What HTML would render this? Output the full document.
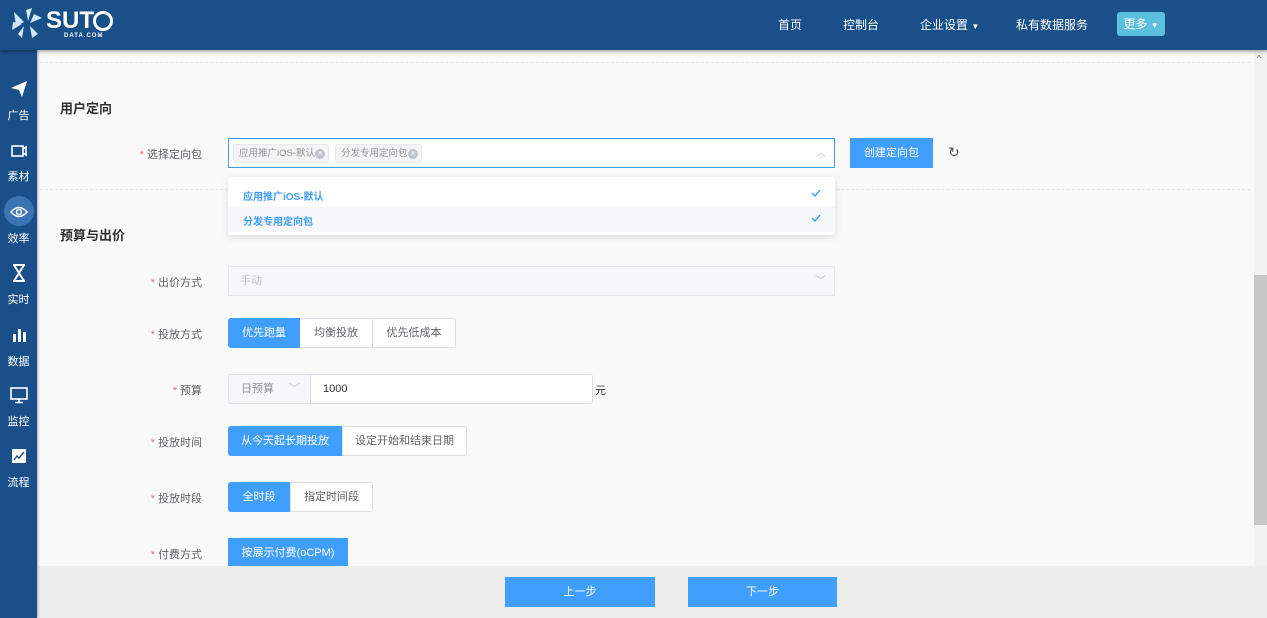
<!DOCTYPE html>
<html><head><meta charset="utf-8"><style>
*{box-sizing:border-box;margin:0;padding:0}
body{width:1267px;height:618px;overflow:hidden;background:#f9f9f9;font-family:"Liberation Sans","Noto Sans CJK SC",sans-serif;font-size:12px;color:#606266;position:relative}
.abs{position:absolute}
.hdr{left:0;top:0;width:1267px;height:50px;background:#1a5089;box-shadow:0 2px 3px rgba(0,0,0,.3);z-index:3}
.nav{color:#fff;font-size:12px;top:16px}
.side{left:0;top:50px;width:37px;height:568px;background:#1a5089;z-index:2;box-shadow:1px 0 2px rgba(0,0,0,.3)}
.si{position:absolute;left:0;width:37px;text-align:center;color:#fff;font-size:11px}
.dot{border-top:1px dashed #e6e6e6;left:40px;width:1210px}
.h{font-size:13px;font-weight:bold;color:#303133;left:60px}
.lbl{width:160px;text-align:right;left:42px;font-size:11px;color:#606266}
.lbl b{color:#f56c6c;font-weight:normal;margin-right:3px}
.btn{position:absolute;height:30px;line-height:28px;text-align:center;font-size:11px;border:1px solid #dcdfe6;background:#fff;color:#606266}
.pri{background:#409eff;border-color:#409eff;color:#fff}
.tag{position:absolute;top:144px;height:19px;line-height:18px;background:#f4f4f5;border:1px solid #e9e9eb;border-radius:3px;font-size:9.5px;color:#909399;padding-left:5px;white-space:nowrap;overflow:hidden}
.tag i{position:absolute;right:3px;top:4px;width:10px;height:10px;border-radius:50%;background:#c0c4cc;color:#fff;font-size:8px;line-height:10px;text-align:center;font-style:normal}
.ck{position:absolute;left:811px}
</style></head><body>
<div class="abs hdr">
 <svg class="abs" style="left:10px;top:8px" width="36" height="32" viewBox="0 0 36 32"><g fill="#cfe7f7"><path d="M4 4 L14 14 L6 18Z"/><path d="M16 2 L22 0 L18 13Z"/><path d="M24 6 L32 10 L20 15Z"/><path d="M20 18 L28 26 L22 30Z"/><path d="M14 18 L12 30 L8 26Z"/><path d="M3 14 L12 16 L2 22Z"/></g></svg>
 <div class="abs" style="left:46px;top:7px;color:#fff;font-size:24px;font-weight:bold">SUT</div>
 <div class="abs" style="left:93px;top:11px;width:20px;height:20px;border:3px solid #fff;border-radius:50%"></div>
 <div class="abs" style="left:64px;top:33px;color:#fff;font-size:6px;font-weight:bold;letter-spacing:1px">DATA.COM</div>
 <div class="abs nav" style="left:778px">首页</div>
 <div class="abs nav" style="left:843px">控制台</div>
 <div class="abs nav" style="left:920px">企业设置 <span style="font-size:8px">▼</span></div>
 <div class="abs nav" style="left:1016px">私有数据服务</div>
 <div class="abs" style="left:1117px;top:12px;width:48px;height:24px;background:#5bc0de;border-radius:3px;color:#fff;font-size:12px;line-height:24px;text-align:center">更多 <span style="font-size:8px">▼</span></div>
</div>
<div class="abs side">
 <div class="si" style="top:30px"><svg width="18" height="18" viewBox="0 0 18 18"><path d="M1 8 L17 1 L12 17 L9 10Z" fill="#fff"/></svg><div style="margin-top:6px">广告</div></div>
 <div class="si" style="top:93px"><svg width="18" height="16" viewBox="0 0 18 16"><rect x="2" y="3" width="11" height="10" fill="none" stroke="#fff" stroke-width="1.6"/><path d="M13 6 L16 4 V12 L13 10" fill="none" stroke="#fff" stroke-width="1.6"/></svg><div style="margin-top:6px">素材</div></div>
 <div class="abs" style="left:4px;top:146px;width:30px;height:30px;border-radius:50%;background:#3a74b2"></div>
 <div class="si" style="top:155px"><svg width="18" height="14" viewBox="0 0 18 14"><path d="M1 7 Q9 -2 17 7 Q9 16 1 7Z" fill="none" stroke="#fff" stroke-width="1.6"/><circle cx="9" cy="7" r="2.5" fill="none" stroke="#fff" stroke-width="1.6"/></svg><div style="margin-top:8px">效率</div></div>
 <div class="si" style="top:214px"><svg width="16" height="18" viewBox="0 0 16 18"><path d="M2 1 H14 M2 17 H14 M3 1 L8 9 L3 17 M13 1 L8 9 L13 17" fill="none" stroke="#fff" stroke-width="2"/></svg><div style="margin-top:6px">实时</div></div>
 <div class="si" style="top:277px"><svg width="16" height="16" viewBox="0 0 16 16"><rect x="2" y="7" width="3" height="8" fill="#fff"/><rect x="7" y="2" width="3" height="13" fill="#fff"/><rect x="12" y="5" width="3" height="10" fill="#fff"/></svg><div style="margin-top:7px">数据</div></div>
 <div class="si" style="top:337px"><svg width="18" height="17" viewBox="0 0 18 17"><rect x="1" y="1" width="16" height="11" fill="none" stroke="#fff" stroke-width="1.6"/><path d="M9 12 V15 M5 15.5 H13" stroke="#fff" stroke-width="1.6"/></svg><div style="margin-top:6px">监控</div></div>
 <div class="si" style="top:398px"><svg width="16" height="16" viewBox="0 0 16 16"><rect x="1" y="1" width="14" height="14" fill="#fff"/><path d="M3 12 L6 8 L8 10 L13 4" fill="none" stroke="#1a5089" stroke-width="1.4"/></svg><div style="margin-top:7px">流程</div></div>
</div>
<div class="abs" style="left:1254px;top:50px;width:13px;height:516px;background:#f1f1f1"></div>
<div class="abs" style="left:1254px;top:275px;width:13px;height:250px;background:#c8c8c8"></div>
<div class="abs" style="left:1257px;top:54px;font-size:8px;color:#555">^</div>
<div class="abs dot" style="top:62px"></div>
<div class="abs dot" style="top:189px"></div>
<div class="abs h" style="top:98px">用户定向</div>
<div class="abs lbl" style="top:146px"><b>*</b>选择定向包</div>
<div class="abs" style="left:228px;top:138px;width:607px;height:30px;border:1px solid #409eff;background:#fff"></div>
<div class="tag" style="left:233px;width:96px">应用推广iOS-默认<i>×</i></div>
<div class="tag" style="left:335px;width:87px">分发专用定向包<i>×</i></div>
<div class="abs" style="left:816px;top:144px;color:#c0c4cc;font-size:10px">︿</div>
<div class="abs" style="left:228px;top:177px;width:607px;height:58px;background:#fff;box-shadow:0 2px 8px rgba(0,0,0,.12);border-radius:3px"></div>
<div class="abs" style="left:228px;top:207px;width:607px;height:25px;background:#f5f7fa"></div>
<div class="abs" style="left:243px;top:188px;font-size:10px;font-weight:bold;color:#409eff">应用推广iOS-默认</div>
<div class="abs" style="left:243px;top:213px;font-size:10px;font-weight:bold;color:#409eff">分发专用定向包</div>
<svg class="ck" style="top:189px" width="10" height="8" viewBox="0 0 10 8"><path d="M1 4 L4 7 L9 1" fill="none" stroke="#409eff" stroke-width="1.4"/></svg>
<svg class="ck" style="top:214px" width="10" height="8" viewBox="0 0 10 8"><path d="M1 4 L4 7 L9 1" fill="none" stroke="#409eff" stroke-width="1.4"/></svg>
<div class="btn pri" style="left:850px;top:138px;width:83px">创建定向包</div>
<div class="abs" style="left:948px;top:144px;font-size:14px;color:#555">↻</div>
<div class="abs h" style="top:225px">预算与出价</div>
<div class="abs lbl" style="top:274px"><b>*</b>出价方式</div>
<div class="abs" style="left:228px;top:266px;width:607px;height:30px;border:1px solid #e4e7ed;background:#f5f7fa;color:#c0c4cc;font-size:11px;line-height:28px;padding-left:11px">手动<span style="position:absolute;right:8px">﹀</span></div>
<div class="abs lbl" style="top:326px"><b>*</b>投放方式</div>
<div class="btn pri" style="left:228px;top:318px;width:72px;border-radius:3px 0 0 3px">优先跑量</div>
<div class="btn" style="left:300px;top:318px;width:73px;border-left:none">均衡投放</div>
<div class="btn" style="left:372px;top:318px;width:84px;border-radius:0 3px 3px 0">优先低成本</div>
<div class="abs lbl" style="top:382px"><b>*</b>预算</div>
<div class="btn" style="left:228px;top:374px;width:83px;background:#f5f7fa;text-align:left;padding-left:12px;color:#909399;border-radius:3px 0 0 3px">日预算<span style="position:absolute;right:10px;color:#c0c4cc">﹀</span></div>
<div class="btn" style="left:310px;top:374px;width:283px;text-align:left;padding-left:12px;border-radius:0 3px 3px 0;color:#303133">1000</div>
<div class="abs" style="left:595px;top:382px;font-size:11px;color:#303133">元</div>
<div class="abs lbl" style="top:434px"><b>*</b>投放时间</div>
<div class="btn pri" style="left:228px;top:426px;width:114px;border-radius:3px 0 0 3px">从今天起长期投放</div>
<div class="btn" style="left:342px;top:426px;width:125px;border-radius:0 3px 3px 0">设定开始和结束日期</div>
<div class="abs lbl" style="top:490px"><b>*</b>投放时段</div>
<div class="btn pri" style="left:228px;top:482px;width:62px;border-radius:3px 0 0 3px">全时段</div>
<div class="btn" style="left:290px;top:482px;width:83px;border-radius:0 3px 3px 0">指定时间段</div>
<div class="abs lbl" style="top:546px"><b>*</b>付费方式</div>
<div class="btn pri" style="left:228px;top:538px;width:120px">按展示付费(oCPM)</div>
<div class="abs" style="left:38px;top:566px;width:1229px;height:52px;background:#eeeeee"></div>
<div class="btn pri" style="left:505px;top:577px;width:150px">上一步</div>
<div class="btn pri" style="left:688px;top:577px;width:149px">下一步</div>
</body></html>
